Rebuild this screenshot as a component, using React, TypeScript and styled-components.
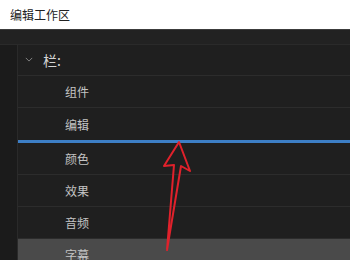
import React from 'react';
import styled, { createGlobalStyle } from 'styled-components';

const Global = createGlobalStyle`
  html, body {
    margin: 0;
    padding: 0;
    width: 350px;
    height: 260px;
    overflow: hidden;
    background: #1f1f1f;
    font-family: 'Noto Sans CJK SC', 'Noto Sans', sans-serif;
  }
`;

const items = ['组件', '编辑', '颜色', '效果', '音频', '字幕'];

export default function App() {
  return (
    <Page>
      <Global />
      <TitleBar>编辑工作区</TitleBar>
      <Gap />
      <Body>
        <Gutter />
        <Panel>
          <GroupHeader>
            <Chevron viewBox="0 0 10 6">
              <path d="M1 1 L5 5 L9 1" fill="none" stroke="#9a9a9a" strokeWidth="1" />
            </Chevron>
            <GroupLabel>栏:</GroupLabel>
          </GroupHeader>
          {items.map((item, i) => (
            <React.Fragment key={item}>
              <Row selected={item === '字幕'} last={i === 1}>
                {item}
              </Row>
              {i === 1 && <DropLine />}
            </React.Fragment>
          ))}
        </Panel>
      </Body>
      <Arrow viewBox="0 0 350 260">
        <polygon
          points="179,142 190,171 181,166 167,250 174,165 164,166"
          fill="none"
          stroke="#e0212b"
          strokeWidth="2"
          strokeLinejoin="round"
        />
      </Arrow>
    </Page>
  );
}

const Page = styled.div`
  position: relative;
  width: 350px;
  height: 260px;
  overflow: hidden;
  background: #1f1f1f;
`;

const TitleBar = styled.div`
  height: 29px;
  box-sizing: border-box;
  background: #ffffff;
  border-bottom: 1px solid #3c3c3c;
  padding-left: 10px;
  display: flex;
  align-items: center;
  font-size: 12px;
  color: #222;
  height: 30px;
`;

const Gap = styled.div`
  height: 14px;
  background: #222222;
  border-bottom: 1px solid #2a2a2a;
`;

const Body = styled.div`
  display: flex;
  flex-direction: row;
`;

const Gutter = styled.div`
  width: 17px;
  flex-shrink: 0;
  background: #1b1b1b;
  border-right: 1px solid #2a2a2a;
  height: 240px;
`;

const Panel = styled.div`
  flex: 1;
  display: flex;
  flex-direction: column;
  background: #1f1f1f;
`;

const GroupHeader = styled.div`
  height: 30px;
  display: flex;
  align-items: center;
  padding-left: 7px;
  border-bottom: 1px solid #2c2c2c;
`;

const Chevron = styled.svg`
  width: 8px;
  height: 5px;
  margin-right: 10px;
  margin-top: -1px;
`;

const GroupLabel = styled.span`
  font-size: 14px;
  color: #d4d4d4;
`;

const Row = styled.div<{ selected?: boolean; last?: boolean }>`
  height: 32px;
  box-sizing: border-box;
  display: flex;
  align-items: center;
  padding-left: 47px;
  font-size: 12px;
  color: #c4c4c4;
  background: ${(p) => (p.selected ? '#4a4a4a' : '#1f1f1f')};
  border-bottom: ${(p) => (p.last ? 'none' : '1px solid #2c2c2c')};
  flex-shrink: 0;
`;

const DropLine = styled.div`
  height: 3px;
  background: #3d7fc6;
  flex-shrink: 0;
`;

const Arrow = styled.svg`
  position: absolute;
  left: 0;
  top: 0;
  width: 350px;
  height: 260px;
  pointer-events: none;
`;
